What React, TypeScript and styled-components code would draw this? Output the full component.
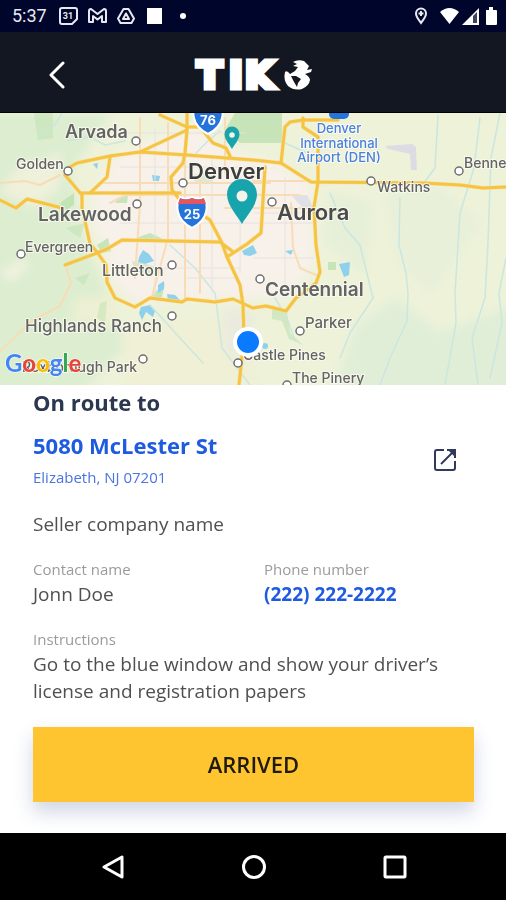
import React from "react";
import styled, { createGlobalStyle } from "styled-components";

const GlobalStyle = createGlobalStyle`
  * { box-sizing: border-box; }
  body { margin: 0; background: #fff; font-family: "Open Sans", "Noto Sans", sans-serif; }
  p, h1, h2, dl, dd, dt { margin: 0; }
  button { font: inherit; border: 0; padding: 0; cursor: pointer; }
`;

const Screen = styled.div`
  display: flex;
  flex-direction: column;
  min-height: 100vh;
`;

const StatusBar = styled.div`
  display: flex;
  align-items: center;
  justify-content: space-between;
  height: 32px;
  padding: 0 8px 0 12px;
  background: #00052b;
  color: #e8e9f0;
`;

const StatusGroup = styled.div<{ $gap: number }>`
  display: flex;
  align-items: center;
  gap: ${(p) => p.$gap}px;
  svg { display: block; }
`;

const Clock = styled.span`
  font: 400 18px/32px Roboto, sans-serif;
  margin-right: 2px;
`;

const Header = styled.header`
  display: grid;
  grid-template-columns: 1fr auto 1fr;
  align-items: center;
  height: 81px;
  padding: 0 40px;
  background: #121722;
  border-bottom: 1px solid #000;
`;

const BackButton = styled.button`
  display: flex;
  align-items: center;
  justify-content: center;
  width: 34px;
  height: 44px;
  background: none;
  margin-top: 6px;
`;

const Logo = styled.svg`
  display: block;
  margin-top: 6px;
`;

const MapView = styled.svg`
  display: block;
  width: 100%;
  height: 272px;
`;

const Content = styled.main`
  display: flex;
  flex-direction: column;
  flex: 1;
  padding: 3px 32px 31px 33px;
`;

const Title = styled.h1`
  font-size: 22px;
  line-height: 28px;
  font-weight: 700;
  color: #2b3850;
`;

const AddressRow = styled.div`
  display: flex;
  align-items: center;
  justify-content: space-between;
  margin-top: 14px;
  padding-right: 16px;
`;

const Address = styled.a`
  display: block;
  text-decoration: none;
`;

const Street = styled.span`
  display: block;
  font-size: 22px;
  line-height: 30px;
  font-weight: 700;
  color: #1f5be0;
`;

const City = styled.span`
  display: block;
  margin-top: 5px;
  font-size: 15px;
  line-height: 24px;
  color: #4a74e0;
`;

const OpenButton = styled.button`
  display: flex;
  background: none;
`;

const Company = styled.p`
  margin-top: 21px;
  font-size: 19px;
  line-height: 28px;
  color: #505050;
`;

const Details = styled.dl`
  display: grid;
  grid-template-columns: 231px 1fr;
  row-gap: 21px;
  margin-top: 21px;
`;

const Detail = styled.div<{ $wide?: boolean }>`
  grid-column: ${(p) => (p.$wide ? "1 / -1" : "auto")};
`;

const Label = styled.dt`
  font-size: 15px;
  line-height: 20px;
  color: #9b9b9b;
`;

const Value = styled.dd`
  margin-top: 2px;
  font-size: 19px;
  line-height: 27px;
  color: #505050;
`;

const Phone = styled.a`
  color: #1f5be0;
  font-weight: 700;
  text-decoration: none;
`;

const ArrivedButton = styled.button`
  && {
    height: 75px;
    margin-top: 22px;
    background: #ffc530;
    color: #1f1a0c;
    font-size: 22px;
    line-height: 30px;
    padding-bottom: 2px;
    font-weight: 600;
    box-shadow: 0 10px 18px rgba(40, 70, 130, 0.22);
  }
`;

const NavBar = styled.nav`
  display: flex;
  align-items: center;
  justify-content: space-between;
  height: 67px;
  padding: 0 97px;
  background: #000;
`;

const NavButton = styled.button`
  display: flex;
  background: none;
`;

type Place = { name: string; x: number; y: number; size: number; weight: number; color?: string; dot?: [number, number] };

const places: Place[] = [
  { name: "Arvada", x: 65, y: 25, size: 18, weight: 600, dot: [136, 28] },
  { name: "Golden", x: 16, y: 56, size: 14, weight: 500, dot: [68, 58] },
  { name: "Denver", x: 188, y: 66, size: 22, weight: 600, color: "#3d3d3d", dot: [183, 70] },
  { name: "Lakewood", x: 38, y: 108, size: 19, weight: 600, dot: [137, 91] },
  { name: "Aurora", x: 277, y: 107, size: 22, weight: 600, color: "#4a4a4a", dot: [272, 89] },
  { name: "Watkins", x: 377, y: 79, size: 14, weight: 500, dot: [371, 68] },
  { name: "Benne", x: 464, y: 55, size: 14, weight: 500, dot: [459, 58] },
  { name: "Evergreen", x: 25, y: 139, size: 14, weight: 500, dot: [21, 141] },
  { name: "Littleton", x: 102, y: 163, size: 16, weight: 500, dot: [172, 152] },
  { name: "Centennial", x: 265, y: 183, size: 19, weight: 600, dot: [260, 166] },
  { name: "Highlands Ranch", x: 25, y: 219, size: 17, weight: 500, dot: [172, 203] },
  { name: "Parker", x: 305, y: 215, size: 15, weight: 500, dot: [300, 218] },
  { name: "Castle Pines", x: 243, y: 247, size: 14, weight: 500, dot: [238, 250] },
  { name: "Roxborough Park", x: 22, y: 259, size: 14, weight: 500, dot: [143, 246] },
  { name: "The Pinery", x: 292, y: 270, size: 14, weight: 500, dot: [287, 272] },
];

const highways = [
  "M0 87L16 95L27 86L62 95",
  "M65 62L70 54L77 50L110 43L140 39L187 42L253 47L281 50L311 69L423 70L460 72L483 75L506 74",
  "M140 39L187 17",
  "M187 -3V17L185 40L183 50L171 64L172 77L180 87L210 107L222 130L227 144L240 172L243 192L244 225L239 272",
  "M160 2L187 14L200 14L213 30L226 35L230 43",
  "M82 80H180",
  "M65 62L82 82L82 95L87 117L90 131L97 139L106 152L107 169L115 185L135 194L150 185L182 189L187 186L215 189L233 186L253 195L266 193L286 198L296 185L316 170L320 159L316 132L314 94L318 69V24L303 14V5",
  "M65 152L97 140L107 136L122 127L220 129L232 138",
  "M227 144L247 131L261 120L265 54",
  "M281 50L285 14L290 9L303 7H338",
  "M110 44L107 64L90 80",
];

const minorRoads = [
  "M140 5V90L135 165", "M168 10V125L152 183", "M185 45V186", "M100 70H270", "M110 90L125 82H300",
  "M0 70L25 68L40 72L60 62", "M66 154L71 170L60 193L33 207L0 238", "M253 68H310", "M291 90L293 135L300 155L316 162",
  "M225 5V60", "M200 60V180", "M225 95H315",
];

const streets = [
  "M120 20H245", "M120 54H258", "M120 110H314", "M125 155H240", "M155 15V182", "M212 45V180",
  "M240 60V160", "M285 65V185", "M187 165H235", "M254 145H314", "M254 100H314",
];

const creeks = [
  "M40 22L55 12L62 0", "M68 28L90 24L105 32L125 28", "M196 40L208 28L220 18", "M170 132L195 155L215 180L222 235L250 272",
  "M438 2L435 55L420 75", "M400 85L399 132L406 160L408 180L407 208L390 245L380 272", "M480 5L474 55L460 100L455 180L456 210L445 272",
  "M500 0L491 45L488 130L485 185L472 225L478 272", "M330 80L345 115L360 132L373 185L350 220L340 245",
  "M275 185L287 205L294 225", "M506 145L499 180L502 210L490 265", "M285 30L312 42", "M150 192L180 225L203 250",
];

const Shield = ({ x, y, label }: { x: number; y: number; label: string }) => (
  <g transform={`translate(${x} ${y})`}>
    <path d="M0-15Q7-12 12-15Q16-8 14 0Q12 10 0 16Q-12 10-14 0Q-16-8-12-15Q-7-12 0-15Z" fill="#2474dc" stroke="#fff" strokeWidth="2" />
    <path d="M-12-14Q-7-11 0-14Q7-11 12-14L14-8H-14Z" fill="#e35560" />
    <text y="7" textAnchor="middle" fill="#fff" fontFamily="Inter, sans-serif" fontSize="13" fontWeight="700">{label}</text>
  </g>
);

const Pin = ({ x, y, scale }: { x: number; y: number; scale: number }) => (
  <g transform={`translate(${x} ${y}) scale(${scale})`}>
    <path d="M0 0C-4-8-15-18-15-30A15 15 0 0 1 15-30C15-18 4-8 0 0Z" fill="#18a4ad" />
    <circle cy="-28" r="5.5" fill="#f4f3e9" />
  </g>
);

const RouteMap = () => (
  <MapView viewBox="0 0 506 272" preserveAspectRatio="xMidYMid slice" role="img" aria-label="Map of the Denver area">
    <defs>
      <filter id="soft" x="-10%" y="-10%" width="120%" height="120%"><feGaussianBlur stdDeviation="5" /></filter>
    </defs>
    <rect width="506" height="272" fill="#edf2d9" />
    <g filter="url(#soft)">
      <path d="M0 0H110L70 60L85 130L110 185L130 230L70 290H-20V0Z" fill="#dcedd0" />
      <path d="M15 55L62 40L60 75L35 95L0 80Z" fill="#eff1da" />
      <path d="M0 160L22 145L30 152L10 170Z" fill="#f1f2df" />
      <path d="M75 185L115 180L118 215L70 210Z" fill="#edf0d2" />
      <path d="M120 215L230 205L260 272H125Z" fill="#eff0d5" />
      <path d="M355 215L395 185L440 220L520 190V290H330Z" fill="#e0eed8" />
      <path d="M330 80L370 90L365 160L325 130Z" fill="#e6efd8" />
      <path d="M385 80L440 75L480 110L430 180L400 150Z" fill="#e8f0da" />
      <path d="M118 40L190 12L230 35L280 52L310 70L315 150L290 185L225 186L135 190L112 170L108 140L90 110L95 75Z" fill="#f7f1e9" />
      <path d="M225 195L253 200L250 245L225 240Z" fill="#eaeadf" />
    </g>
    <g fill="#b9dfad" opacity=".75">
      <path d="M235 0H282V30H240L226 15Z" />
      <path d="M34 0H53V25L38 27Z" opacity=".6" />
      <path d="M60 90L74 80V92L66 97Z" /><path d="M66 115L85 110L80 125Z" opacity=".6" />
      <path d="M97 132L108 125L111 138L102 140Z" /><path d="M136 125L150 120L165 127H136Z" />
      <path d="M192 62L213 58V70H195Z" opacity=".5" /><path d="M118 86L128 82L127 90H115Z" />
      <path d="M132 148L162 155L155 162L135 158Z" opacity=".7" />
      <path d="M156 178L165 170L162 184L150 185Z" /><path d="M328 149H336V157H328Z" />
      <path d="M272 192L287 198L290 220L303 232L289 226L282 208L272 206Z" opacity=".7" />
      <path d="M75 165L90 160L84 172Z" opacity=".6" /><path d="M100 190L107 188L105 210L97 205Z" opacity=".6" />
    </g>
    <g fill="#8fd1ed">
      <path d="M139 144L143 137L149 141L154 148L145 151L138 149Z" /><path d="M139 200L141 194L150 192L155 198L153 204L146 199L142 207Z" />
      <path d="M158 172L164 168V176L158 180Z" /><path d="M167 181L175 182L180 187L168 187Z" />
      <path d="M242 138L253 132L257 140L250 143L244 142Z" /><path d="M339 151L350 149L349 162L344 164Z" />
      <path d="M152 62L160 63L159 68H153Z" /><path d="M93 51L98 50L97 56Z" /><path d="M285 138L293 137L291 142Z" />
      <circle cx="265" cy="233" r="3" />
    </g>
    <path d="M385 33L412 31L416 34L417 57H411L410 41L388 36Z" fill="#dddce4" />
    <path d="M292 83L307 82L314 96L302 94Z" fill="#dfe0e8" />
    <g fill="none" strokeLinejoin="round" strokeLinecap="round">
      {creeks.map((d) => <path key={d} d={d} stroke="#cbe6e0" strokeWidth="1.5" />)}
      {streets.map((d) => <path key={d} d={d} stroke="#e6e2e0" strokeWidth="1" />)}
      {minorRoads.map((d) => <path key={d} d={d} stroke="#f8dcb8" strokeWidth="2" />)}
      {highways.map((d) => <path key={d} d={d} stroke="#f8e2a2" strokeWidth="4" />)}
      {highways.map((d) => <path key={d} d={d} stroke="#f6c445" strokeWidth="3" />)}
    </g>
    <rect x="329" y="-6" width="20" height="12" rx="5" fill="#2474dc" />
    <Shield x={208} y={5} label="76" />
    <Shield x={192} y={99} label="25" />
    {places.map((p) => (
      <g key={p.name}>
        {p.dot && <circle cx={p.dot[0]} cy={p.dot[1]} r="4" fill="#fff" stroke="#6f6f6f" strokeWidth="1.5" />}
        <text x={p.x} y={p.y} fontFamily="Inter, sans-serif" fontSize={p.size} fontWeight={p.weight}
          fill={p.color || "#636363"} stroke="#fafaf0" strokeWidth="2" strokeOpacity=".8" paintOrder="stroke">{p.name}</text>
      </g>
    ))}
    <g fontFamily="Inter, sans-serif" fontSize="13" fontWeight="500" fill="#4a80de" textAnchor="middle" stroke="#fafaf0" strokeWidth="2" paintOrder="stroke">
      <text x="339" y="20">Denver</text>
      <text x="339" y="35">International</text>
      <text x="339" y="49">Airport (DEN)</text>
    </g>
    <Pin x={232} y={36} scale={0.5} />
    <Pin x={242} y={111} scale={1} />
    <circle cx="248" cy="229" r="15" fill="#fff" />
    <circle cx="248" cy="229" r="11" fill="#0a7bff" />
    <text x="5" y="259" fontFamily="Lato, sans-serif" fontSize="24" fontWeight="700" stroke="#fff" strokeWidth="1" paintOrder="stroke">
      <tspan fill="#4285f4">G</tspan><tspan fill="#ea4335">o</tspan><tspan fill="#fbbc05">o</tspan><tspan fill="#4285f4">g</tspan><tspan fill="#34a853">l</tspan><tspan fill="#ea4335">e</tspan>
    </text>
  </MapView>
);

export default function App() {
  return (
    <Screen>
      <GlobalStyle />
      <StatusBar>
        <StatusGroup $gap={10}>
          <Clock>5:37</Clock>
          <svg width="19" height="18" viewBox="0 0 19 18" fill="none" stroke="currentColor" strokeWidth="2">
            <path d="M3 1H16Q18 1 18 3V12L13 17H3Q1 17 1 15V3Q1 1 3 1Z" />
            <text x="9" y="12" textAnchor="middle" fontFamily="Roboto, sans-serif" fontSize="9" fontWeight="700" fill="currentColor" stroke="none">31</text>
          </svg>
          <svg width="19" height="16" viewBox="0 0 19 16" fill="none" stroke="currentColor" strokeWidth="2" strokeLinejoin="round">
            <path d="M1 3Q1 1 3 1L9.500 6L16 1Q18 1 18 3V14H14V8L9.500 11.500L5 8V14H1Z" />
          </svg>
          <svg width="18" height="16" viewBox="0 0 18 16" fill="none" stroke="currentColor" strokeWidth="2" strokeLinejoin="round">
            <path d="M6.500 1H11.500L17 10.500L14.500 15H3.500L1 10.500Z" />
            <path d="M9 5.500L12 11H6Z" />
          </svg>
          <svg width="17" height="16"><rect x="2" width="15" height="16" fill="#fff" /></svg>
          <svg width="24" height="8"><circle cx="11" cy="4" r="3" fill="#fff" /></svg>
        </StatusGroup>
        <StatusGroup $gap={3}>
          <svg width="23" height="18" viewBox="0 0 23 18" fill="none" stroke="currentColor" strokeWidth="2">
            <path d="M7 16C5 13 2 10 2 6.500A5 5 0 0 1 12 6.500C12 10 9 13 7 16Z" /><path d="M7 4V9M4.500 6.500H9.500" />
          </svg>
          <svg width="19" height="16" viewBox="0 0 19 16" fill="#fff"><path d="M0 4Q9.500-4 19 4L9.500 16Z" /></svg>
          <svg width="17" height="17" viewBox="0 0 17 17"><path d="M0 17L17 0V17Z" fill="#fff" /><path d="M11 8L15 4V15H11Z" fill="#00052b" opacity=".75" /></svg>
          <svg width="16" height="18" viewBox="0 0 16 18"><path d="M4 3H7V0H11V3H14Q15 3 15 4V17Q15 18 14 18H5Q4 18 4 17Z" fill="#fff" /></svg>
        </StatusGroup>
      </StatusBar>

      <Header>
        <BackButton aria-label="Back">
          <svg width="16" height="28" viewBox="0 0 16 28" fill="none" stroke="#fff" strokeWidth="3" strokeLinecap="round" strokeLinejoin="round"><path d="M14 2L2 14L14 26" /></svg>
        </BackButton>
        <Logo width="118" height="34" viewBox="0 0 118 34" fill="#fff" role="img" aria-label="TIKO">
          <text x="3 35 51" y="30" fontFamily="DejaVu Sans, sans-serif" fontSize="37" fontWeight="700" stroke="#fff" strokeWidth="5">TIK</text>
          <g transform="translate(90 2)">
            <path d="M9 2Q14-1 20 1L25 6L23 10L28 9L27 12L21 14Q26 17 26 20Q25 26 18 29Q10 31 4 26Q-1 20 1 12Q3 10 6 14L11 11L14 7L9 6L13 4Z" />
            <path d="M7 16L12 16L17 19L14 23L13 27L10 22Z" fill="#121722" />
          </g>
        </Logo>
      </Header>

      <RouteMap />

      <Content>
        <Title>On route to</Title>
        <AddressRow>
          <Address href="#address">
            <Street>5080 McLester St</Street>
            <City>Elizabeth, NJ 07201</City>
          </Address>
          <OpenButton aria-label="Open address in maps">
            <svg width="26" height="26" viewBox="0 0 26 26" fill="none" stroke="#303a5c" strokeWidth="2">
              <path d="M12 3H5Q3 3 3 5V21Q3 23 5 23H21Q23 23 23 21V14" />
              <path d="M9 17L21 5" /><path d="M16 3H23V10Z" fill="#303a5c" stroke="none" /><path d="M15 3H23V11" />
            </svg>
          </OpenButton>
        </AddressRow>
        <Company>Seller company name</Company>
        <Details>
          <Detail>
            <Label>Contact name</Label>
            <Value>Jonn Doe</Value>
          </Detail>
          <Detail>
            <Label>Phone number</Label>
            <Value><Phone href="tel:+12222222222">(222) 222-2222</Phone></Value>
          </Detail>
          <Detail $wide>
            <Label>Instructions</Label>
            <Value>Go to the blue window and show your driver’s license and registration papers</Value>
          </Detail>
        </Details>
        <ArrivedButton>ARRIVED</ArrivedButton>
      </Content>

      <NavBar aria-label="System navigation">
        <NavButton aria-label="Back">
          <svg width="32" height="28" viewBox="0 0 32 28" fill="none" stroke="#fff" strokeWidth="3" strokeLinejoin="round"><path d="M25 4V24L7 14Z" /></svg>
        </NavButton>
        <NavButton aria-label="Home">
          <svg width="28" height="28" viewBox="0 0 28 28" fill="none" stroke="#fff" strokeWidth="3"><circle cx="13" cy="14" r="10.500" /></svg>
        </NavButton>
        <NavButton aria-label="Recent apps">
          <svg width="28" height="28" viewBox="0 0 28 28" fill="none" stroke="#fff" strokeWidth="3"><rect x="4" y="4" width="20" height="20" rx="1" /></svg>
        </NavButton>
      </NavBar>
    </Screen>
  );
}
